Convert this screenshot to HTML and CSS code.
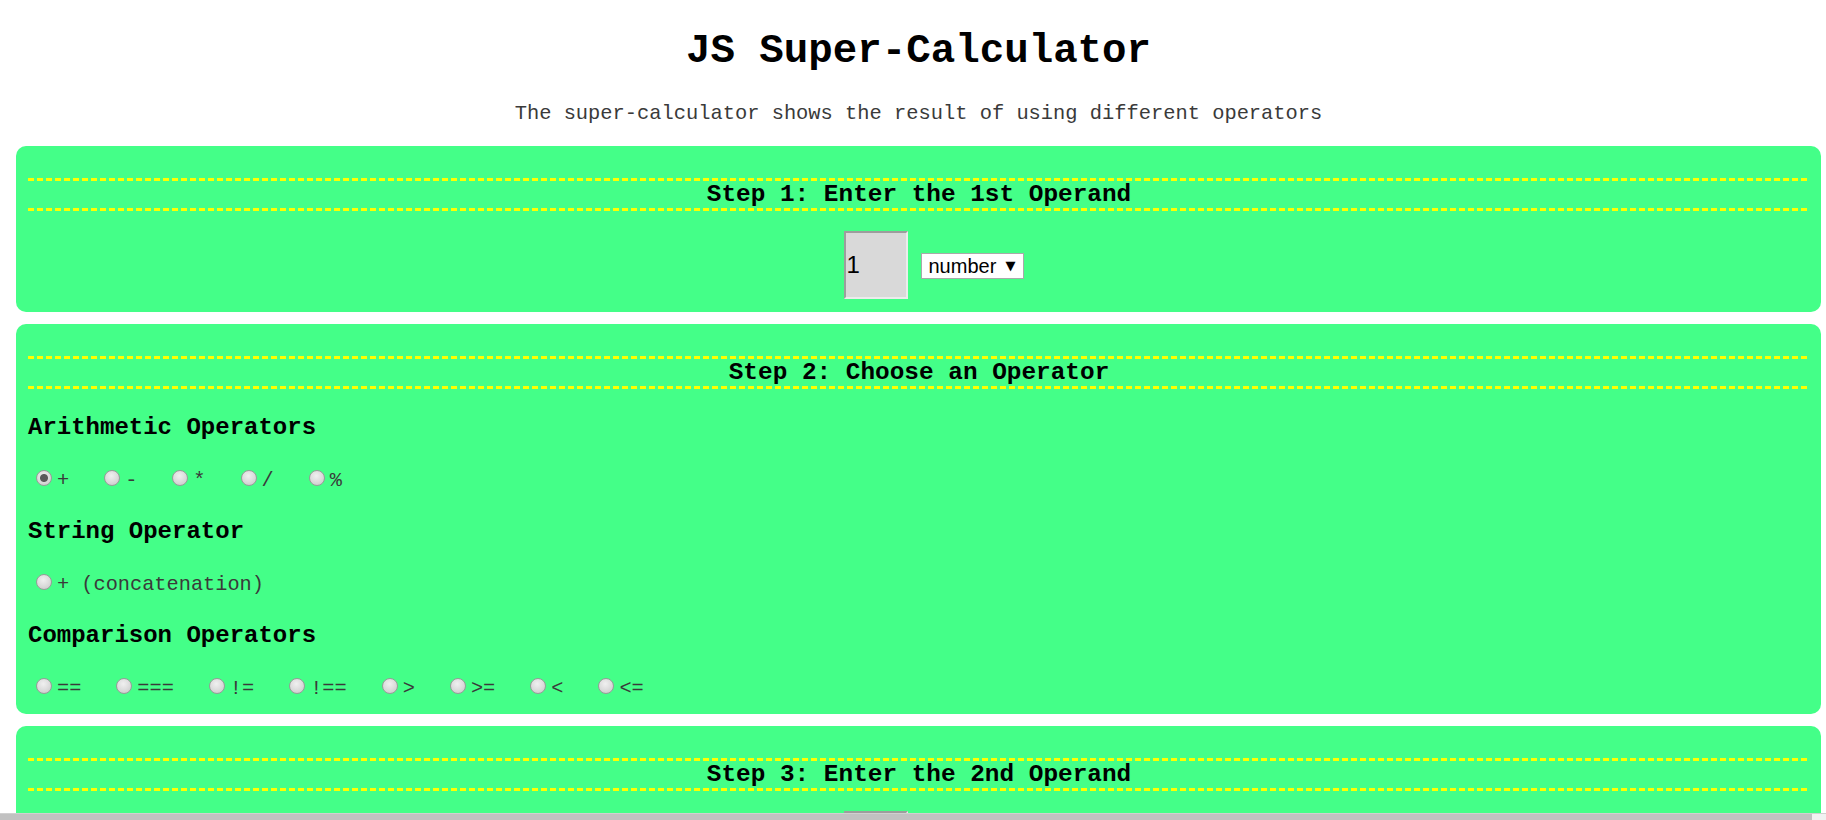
FILE: index.html
```html
<!DOCTYPE html>
<html lang="en">
<head>
<meta charset="utf-8">
<title>JS Super-Calculator</title>
<link rel="stylesheet" href="styles.css">
</head>
<body>
<div class="page">
  <header class="masthead">
    <h1 class="title">JS Super-Calculator</h1>
    <p class="subtitle">The super-calculator shows the result of using different operators</p>
  </header>

  <section class="step">
    <h2 class="step-title">Step 1: Enter the 1st Operand</h2>
    <div class="operand-row">
      <input class="operand" type="text" value="1">
      <span class="select-wrap"><select class="type-select"><option>number</option><option>string</option><option>boolean</option></select></span>
    </div>
  </section>

  <section class="step">
    <h2 class="step-title">Step 2: Choose an Operator</h2>

    <h3 class="group-title">Arithmetic Operators</h3>
    <div class="options">
      <label class="opt"><input class="radio" type="radio" name="op" checked><span>+</span></label>
      <label class="opt"><input class="radio" type="radio" name="op"><span>-</span></label>
      <label class="opt"><input class="radio" type="radio" name="op"><span>*</span></label>
      <label class="opt"><input class="radio" type="radio" name="op"><span>/</span></label>
      <label class="opt"><input class="radio" type="radio" name="op"><span>%</span></label>
    </div>

    <h3 class="group-title">String Operator</h3>
    <div class="options">
      <label class="opt"><input class="radio" type="radio" name="op"><span>+ (concatenation)</span></label>
    </div>

    <h3 class="group-title">Comparison Operators</h3>
    <div class="options">
      <label class="opt"><input class="radio" type="radio" name="op"><span>==</span></label>
      <label class="opt"><input class="radio" type="radio" name="op"><span>===</span></label>
      <label class="opt"><input class="radio" type="radio" name="op"><span>!=</span></label>
      <label class="opt"><input class="radio" type="radio" name="op"><span>!==</span></label>
      <label class="opt"><input class="radio" type="radio" name="op"><span>&gt;</span></label>
      <label class="opt"><input class="radio" type="radio" name="op"><span>&gt;=</span></label>
      <label class="opt"><input class="radio" type="radio" name="op"><span>&lt;</span></label>
      <label class="opt"><input class="radio" type="radio" name="op"><span>&lt;=</span></label>
    </div>
  </section>

  <section class="step">
    <h2 class="step-title">Step 3: Enter the 2nd Operand</h2>
    <div class="operand-row">
      <input class="operand" type="text" value="">
      <span class="select-wrap"><select class="type-select"><option>number</option><option>string</option><option>boolean</option></select></span>
    </div>
  </section>
</div>
<div class="hscroll"><div class="hscroll-thumb"></div></div>
</body>
</html>
```

FILE: styles.css
```css
html, body {
  margin: 0;
  padding: 0;
  background: #ffffff;
}

body {
  font-family: "Liberation Mono", "Courier New", monospace;
  color: #000;
}

.page {
  margin: 0 5px 0 16px;
}

.masthead {
  text-align: center;
}

.title {
  margin: 28px 0 0;
  font-size: 40.8px;
  line-height: 46px;
  font-weight: bold;
}

.subtitle {
  margin: 28px 0 0;
  font-size: 20.4px;
  line-height: 24px;
  color: #3a3a3a;
}

.step {
  background: #44ff88;
  border-radius: 10px;
  padding: 32px 11px 13px 12px;
  margin-top: 20px;
}

.step + .step {
  margin-top: 12px;
}

.step-title {
  margin: 0;
  padding: 3px 0;
  font-size: 24.4px;
  line-height: 27px;
  font-weight: bold;
  text-align: center;
  background-image:
    repeating-linear-gradient(to right, #ffff00 0, #ffff00 6px, transparent 6px, transparent 9px),
    repeating-linear-gradient(to right, #ffff00 0, #ffff00 6px, transparent 6px, transparent 9px);
  background-size: 100% 3px, 100% 3px;
  background-position: left top, left bottom;
  background-repeat: no-repeat;
}

.operand-row {
  display: flex;
  justify-content: center;
  align-items: baseline;
  gap: 13px;
  margin-top: 20px;
  padding-left: 29px;
}

.operand {
  box-sizing: border-box;
  width: 64px;
  height: 68px;
  margin: 0;
  padding: 0 1px;
  font-family: "Liberation Sans", Arial, sans-serif;
  font-size: 24px;
  color: #000;
  background: #d9d9d9;
  border-style: solid;
  border-width: 2px;
  border-color: #9d9d9d #ececec #ececec #9d9d9d;
  outline: none;
}

.select-wrap {
  position: relative;
  display: inline-block;
}

.select-wrap::after {
  content: "\25BC";
  position: absolute;
  right: 8px;
  top: 6px;
  font-family: "DejaVu Sans", sans-serif;
  font-size: 13px;
  line-height: 14px;
  color: #000;
  pointer-events: none;
}

.type-select {
  -webkit-appearance: none;
  appearance: none;
  box-sizing: border-box;
  width: 103px;
  height: 26px;
  margin: 0;
  padding: 0 0 0 7px;
  font-family: "Liberation Sans", Arial, sans-serif;
  font-size: 20px;
  color: #000;
  background: #ffffff;
  border: 1px solid #a9a9a9;
  border-radius: 0;
}

.group-title {
  margin: 25px 0 0;
  font-size: 24px;
  line-height: 28px;
  font-weight: bold;
}

.options {
  display: flex;
  align-items: baseline;
  margin-top: 27px;
  font-size: 20.3px;
  line-height: 24px;
  color: #3a3a3a;
}

.opt {
  display: block;
  margin-right: 27px;
  white-space: pre;
}

.radio {
  -webkit-appearance: none;
  appearance: none;
  box-sizing: border-box;
  display: inline-block;
  width: 16px;
  height: 16px;
  margin: 0 5px 0 8px;
  vertical-align: baseline;
  border: 1px solid #9a9a9a;
  border-radius: 50%;
  background: radial-gradient(circle at 45% 35%, #f0f0f0 0, #dcdcdc 50%, #c4c4c4 100%);
}

.radio:checked {
  background:
    radial-gradient(circle at 50% 50%, #5a5a5a 0, #5a5a5a 3.5px, rgba(90,90,90,0) 4.5px),
    radial-gradient(circle at 45% 35%, #f0f0f0 0, #dcdcdc 50%, #c4c4c4 100%);
}

.hscroll {
  position: fixed;
  left: 0;
  right: 0;
  bottom: 0;
  height: 6px;
  background: #f1f1f1;
  border-top: 1px solid #d0d0d0;
}

.hscroll-thumb {
  height: 100%;
  margin-right: 14px;
  background: #c1c1c1;
}
```
